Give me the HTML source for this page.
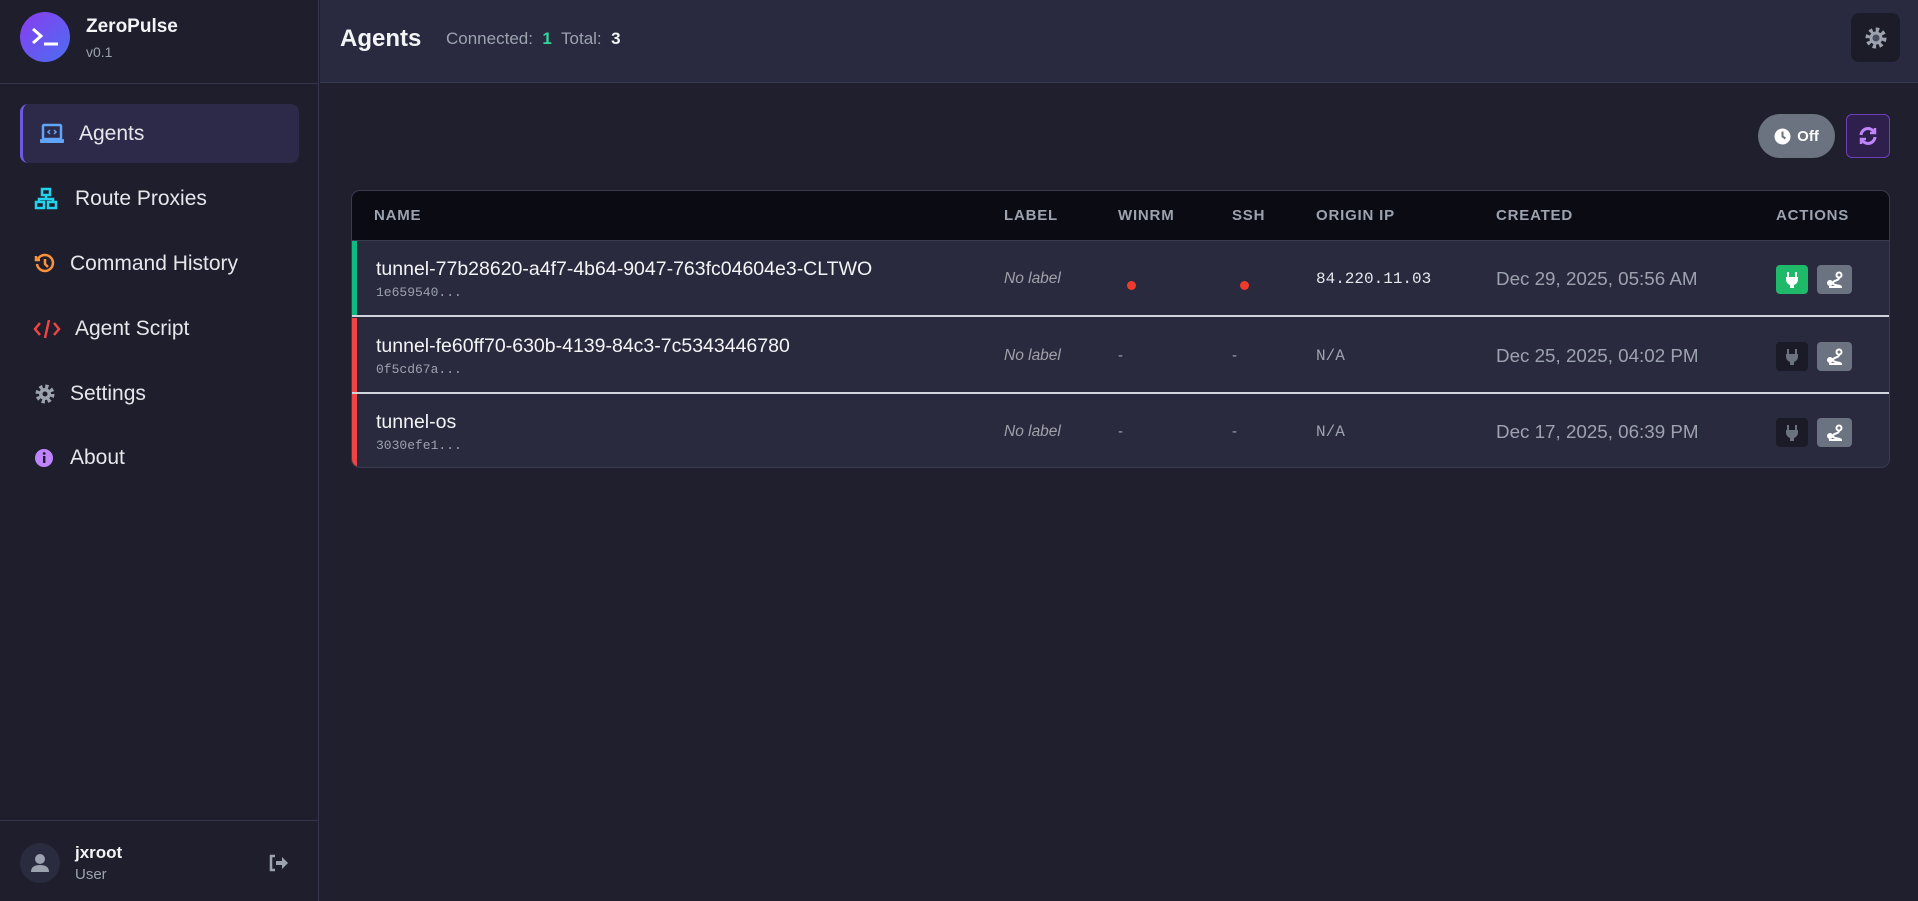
<!DOCTYPE html>
<html><head><meta charset="utf-8"><style>
*{box-sizing:border-box;margin:0;padding:0}
body{width:1918px;height:901px;overflow:hidden;background:#1f1f2d;font-family:"Liberation Sans",sans-serif;color:#e5e7eb;position:relative}
.sb{position:absolute;left:0;top:0;width:319px;height:901px;background:#1e1e2c;border-right:1px solid #34354a}
.logo{position:absolute;left:20px;top:12px;width:50px;height:50px;border-radius:50%;background:linear-gradient(135deg,#8a3cf0,#4a6ef2)}
.brand{position:absolute;left:86px;top:16px;font-size:19px;font-weight:bold;color:#f3f4f6}
.ver{position:absolute;left:86px;top:44px;font-size:14px;color:#9ca3af}
.sbline{position:absolute;left:0;top:83px;width:319px;border-top:1px solid #34354a}
.nav{position:absolute;left:20px;width:279px;height:59px;display:flex;align-items:center;font-size:21px;color:#e5e7eb}
.nav.act{background:#2c2a48;border-left:3px solid #6d5ae0;border-radius:8px}
.nav svg{position:absolute}
.nav span{position:absolute}
.foot{position:absolute;left:0;top:820px;width:319px;border-top:1px solid #34354a}
.hdr{position:absolute;left:320px;top:0;width:1598px;height:83px;background:#292a3f;border-bottom:1px solid #38394e}
.tbl{position:absolute;left:351px;top:190px;width:1539px;height:278px;border:1px solid #3a3b50;border-radius:9px;overflow:hidden;background:#2a2a3e}
.th{position:absolute;left:0;top:0;width:100%;height:50px;background:#0b0b14;border-bottom:1px solid #3a3b50}
.th span{position:absolute;top:16px;font-size:15px;font-weight:bold;color:#9ca3af;letter-spacing:.8px}
.row{position:absolute;left:0;width:100%;height:76px}
.row .bar{position:absolute;left:0;top:0;width:5px;height:100%}
.row .sep{position:absolute;left:0;bottom:0;width:100%;border-top:2px solid #d1d5db}
.nm{position:absolute;left:24px;top:17px;font-size:19.5px;color:#f3f4f6}
.id{position:absolute;left:24px;top:44px;font-family:"Liberation Mono",monospace;font-size:13px;color:#9ca3af}
.lb{position:absolute;left:652px;top:29px;font-size:15.5px;font-style:italic;color:#a1a1aa}
.dot{position:absolute;top:40px;width:9px;height:9px;border-radius:50%;background:#ef3b2d}
.dash{position:absolute;top:29px;font-size:15px;color:#9ca3af}
.ip{position:absolute;left:964px;top:29px;font-family:"Liberation Mono",monospace;font-size:16px}
.dt{position:absolute;left:1144px;top:27px;font-size:18.8px;color:#9ca3af}
.b1{position:absolute;left:1424px;top:24px;width:32px;height:29px;border-radius:4px;display:flex;align-items:center;justify-content:center}
.b2{position:absolute;left:1465px;top:24px;width:35px;height:29px;border-radius:4px;background:#6b7280;display:flex;align-items:center;justify-content:center}
</style></head><body>
<div class="sb">
 <div class="logo"><svg width="50" height="50" viewBox="0 0 50 50"><path d="M13 17 L21 24 L13 31" stroke="#fff" stroke-width="3" fill="none"/><path d="M24 32 H38" stroke="#fff" stroke-width="3"/></svg></div>
 <div class="brand">ZeroPulse</div><div class="ver">v0.1</div>
 <div class="sbline"></div>
 <div class="nav act" style="top:104px"><svg style="left:16px" width="26" height="22" viewBox="0 0 26 22"><rect x="4" y="2" width="18" height="14" rx="1" fill="none" stroke="#60a5fa" stroke-width="2.5"/><rect x="1" y="16" width="24" height="4" rx="1" fill="#60a5fa"/><path d="M11 7 l-2 2 2 2 M15 7 l2 2 -2 2" stroke="#60a5fa" stroke-width="1.5" fill="none"/></svg><span style="left:56px">Agents</span></div>
 <div class="nav" style="top:169px"><svg style="left:14px" width="24" height="24" viewBox="0 0 24 24" fill="none" stroke="#22d3ee" stroke-width="2.5"><rect x="8" y="2" width="8" height="6"/><rect x="2" y="15" width="8" height="6"/><rect x="14" y="15" width="8" height="6"/><path d="M12 8v4M5 15v-3h14v3"/></svg><span style="left:55px">Route Proxies</span></div>
 <div class="nav" style="top:234px"><svg style="left:14px" width="22" height="22" viewBox="0 0 22 22" fill="none" stroke="#fb923c" stroke-width="2.5"><path d="M4 6 A8 8 0 1 1 3 11"/><path d="M2 3v4h4"/><path d="M11 6v5l3 3"/></svg><span style="left:50px">Command History</span></div>
 <div class="nav" style="top:299px"><svg style="left:13px" width="28" height="22" viewBox="0 0 28 22" fill="none" stroke="#ef4444" stroke-width="2.5"><path d="M7 5 L2 11 L7 17M21 5 L26 11 L21 17M16 2 L12 20"/></svg><span style="left:55px">Agent Script</span></div>
 <div class="nav" style="top:364px"><svg style="left:14px" width="22" height="22" viewBox="0 0 22 22"><circle cx="11" cy="11" r="7" fill="none" stroke="#9ca3af" stroke-width="5" stroke-dasharray="3 2.5"/><circle cx="11" cy="11" r="6" fill="#9ca3af"/><circle cx="11" cy="11" r="2.5" fill="#1e1e2c"/></svg><span style="left:50px">Settings</span></div>
 <div class="nav" style="top:428px"><svg style="left:14px" width="20" height="20" viewBox="0 0 20 20"><circle cx="10" cy="10" r="9" fill="#c084fc"/><rect x="9" y="8" width="2.4" height="7" fill="#1e1e2c"/><circle cx="10.2" cy="5.5" r="1.4" fill="#1e1e2c"/></svg><span style="left:50px">About</span></div>
 <div class="foot"></div>
 <div style="position:absolute;left:20px;top:843px;width:40px;height:40px;border-radius:50%;background:#2a2b3e"><svg width="40" height="40" viewBox="0 0 40 40"><circle cx="20" cy="16" r="5" fill="#9ca3af"/><path d="M11 29 Q11 22 20 22 Q29 22 29 29Z" fill="#9ca3af"/></svg></div>
 <div style="position:absolute;left:75px;top:843px;font-size:17px;font-weight:bold;color:#f3f4f6">jxroot</div>
 <div style="position:absolute;left:75px;top:866px;font-size:15px;color:#9ca3af">User</div>
 <svg style="position:absolute;left:268px;top:853px" width="22" height="20" viewBox="0 0 22 20"><path d="M7 3H3v14h4" stroke="#9ca3af" stroke-width="2.5" fill="none"/><path d="M8 8h6V4l6 6-6 6v-4H8z" fill="#9ca3af"/></svg>
</div>
<div class="hdr">
 <div style="position:absolute;left:20px;top:25px;font-size:24px;font-weight:bold;color:#f3f4f6">Agents</div>
 <div style="position:absolute;left:126px;top:29px;font-size:17px;color:#9ca3af">Connected:&nbsp; <b style="color:#34d399">1</b>&nbsp; Total:&nbsp; <b style="color:#f3f4f6">3</b></div>
 <div style="position:absolute;left:1531px;top:13px;width:49px;height:49px;border-radius:8px;background:#1c1c28;display:flex;align-items:center;justify-content:center"><svg width="24" height="24" viewBox="0 0 24 24"><circle cx="12" cy="12" r="8" fill="none" stroke="#9ca3af" stroke-width="5" stroke-dasharray="3.2 3"/><circle cx="12" cy="12" r="6.5" fill="#9ca3af"/><circle cx="12" cy="12" r="3.5" fill="#4b4d5e"/></svg></div>
</div>
<div style="position:absolute;left:1758px;top:114px;width:77px;height:44px;border-radius:22px;background:#6b7280;display:flex;align-items:center;justify-content:center;gap:6px;font-size:15px;font-weight:bold;color:#fff"><svg width="17" height="17" viewBox="0 0 17 17"><circle cx="8.5" cy="8.5" r="8" fill="#fff"/><path d="M8.5 3.5v5l3 2" stroke="#6b7280" stroke-width="2" fill="none"/></svg>Off</div>
<div style="position:absolute;left:1846px;top:114px;width:44px;height:44px;border-radius:6px;background:#2e1f4c;border:1px solid #6b3fb8;display:flex;align-items:center;justify-content:center"><svg width="22" height="22" viewBox="0 0 22 22" fill="none" stroke="#c084fc" stroke-width="3"><path d="M4 10a7 7 0 0 1 13-3"/><path d="M18 12a7 7 0 0 1-13 3"/><path d="M18 3v5h-5M4 19v-5h5" stroke-width="2.5"/></svg></div>
<div class="tbl">
 <div class="th"><span style="left:22px">NAME</span><span style="left:652px">LABEL</span><span style="left:766px">WINRM</span><span style="left:880px">SSH</span><span style="left:964px">ORIGIN IP</span><span style="left:1144px">CREATED</span><span style="left:1424px">ACTIONS</span></div>
 <div class="row" style="top:50px"><div class="bar" style="background:#10b981"></div><div class="nm">tunnel-77b28620-a4f7-4b64-9047-763fc04604e3-CLTWO</div><div class="id">1e659540...</div><div class="lb">No label</div><div class="dot" style="left:775px"></div><div class="dot" style="left:888px"></div><div class="ip">84.220.11.03</div><div class="dt">Dec 29, 2025, 05:56 AM</div><div class="b1" style="background:#1fb96a"><svg width="14" height="18" viewBox="0 0 14 18"><path d="M3 1v5M11 1v5" stroke="#fff" stroke-width="2"/><path d="M1 6h12v3a6 6 0 0 1-4 5v3H5v-3a6 6 0 0 1-4-5z" fill="#fff"/></svg></div><div class="b2"><svg width="18" height="18" viewBox="0 0 18 18" fill="none" stroke="#fff" stroke-width="2"><circle cx="13" cy="4" r="2.5"/><circle cx="4" cy="12" r="2" fill="#fff"/><path d="M13 7c0 3-6 2-6 5s8 2 8 4H3"/></svg></div><div class="sep"></div></div>
 <div class="row" style="top:127px"><div class="bar" style="background:#ef4444"></div><div class="nm">tunnel-fe60ff70-630b-4139-84c3-7c5343446780</div><div class="id">0f5cd67a...</div><div class="lb">No label</div><div class="dash" style="left:766px">-</div><div class="dash" style="left:880px">-</div><div class="ip" style="color:#9ca3af">N/A</div><div class="dt">Dec 25, 2025, 04:02 PM</div><div class="b1" style="background:#1b1b27"><svg width="14" height="18" viewBox="0 0 14 18"><path d="M3 1v5M11 1v5" stroke="#6b7280" stroke-width="2"/><path d="M1 6h12v3a6 6 0 0 1-4 5v3H5v-3a6 6 0 0 1-4-5z" fill="#6b7280"/></svg></div><div class="b2"><svg width="18" height="18" viewBox="0 0 18 18" fill="none" stroke="#fff" stroke-width="2"><circle cx="13" cy="4" r="2.5"/><circle cx="4" cy="12" r="2" fill="#fff"/><path d="M13 7c0 3-6 2-6 5s8 2 8 4H3"/></svg></div><div class="sep"></div></div>
 <div class="row" style="top:203px"><div class="bar" style="background:#ef4444"></div><div class="nm">tunnel-os</div><div class="id">3030efe1...</div><div class="lb">No label</div><div class="dash" style="left:766px">-</div><div class="dash" style="left:880px">-</div><div class="ip" style="color:#9ca3af">N/A</div><div class="dt">Dec 17, 2025, 06:39 PM</div><div class="b1" style="background:#1b1b27"><svg width="14" height="18" viewBox="0 0 14 18"><path d="M3 1v5M11 1v5" stroke="#6b7280" stroke-width="2"/><path d="M1 6h12v3a6 6 0 0 1-4 5v3H5v-3a6 6 0 0 1-4-5z" fill="#6b7280"/></svg></div><div class="b2"><svg width="18" height="18" viewBox="0 0 18 18" fill="none" stroke="#fff" stroke-width="2"><circle cx="13" cy="4" r="2.5"/><circle cx="4" cy="12" r="2" fill="#fff"/><path d="M13 7c0 3-6 2-6 5s8 2 8 4H3"/></svg></div></div>
</div>
</body></html>
